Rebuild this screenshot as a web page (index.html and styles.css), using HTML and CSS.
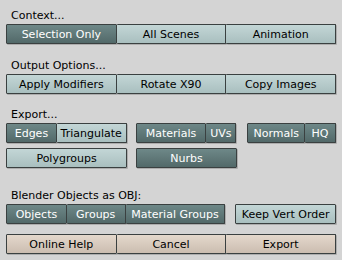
FILE: index.html
```html
<!DOCTYPE html>
<html lang="en">
<head>
    <meta charset="UTF-8">
    <title>OBJ Export</title>
    <link rel="stylesheet" href="styles.css">
</head>
<body>
    <div class="panel">
        <div class="section s-context">
            <div class="label">Context...</div>
            <div class="row">
                <div class="btn dark grow">Selection Only</div>
                <div class="btn light grow join">All Scenes</div>
                <div class="btn light grow join">Animation</div>
            </div>
        </div>

        <div class="section s-output">
            <div class="label">Output Options...</div>
            <div class="row">
                <div class="btn light grow">Apply Modifiers</div>
                <div class="btn light grow join">Rotate X90</div>
                <div class="btn light grow join">Copy Images</div>
            </div>
        </div>

        <div class="section s-export">
            <div class="label">Export...</div>
            <div class="row">
                <div class="btn dark w-edges">Edges</div>
                <div class="btn light join w-tri">Triangulate</div>
                <div class="btn dark w-mat gap9">Materials</div>
                <div class="btn dark join w-uvs">UVs</div>
                <div class="btn dark w-norm gap11">Normals</div>
                <div class="btn dark join w-hq">HQ</div>
            </div>
            <div class="row row2">
                <div class="btn light w-poly">Polygroups</div>
                <div class="btn dark w-nurbs gap9">Nurbs</div>
            </div>
        </div>

        <div class="section s-objects">
            <div class="label">Blender Objects as OBJ:</div>
            <div class="row">
                <div class="btn dark w-obj">Objects</div>
                <div class="btn dark join w-grp">Groups</div>
                <div class="btn dark join w-matgrp">Material Groups</div>
                <div class="btn light w-keep gap10">Keep Vert Order</div>
            </div>
        </div>

        <div class="row s-actions">
            <div class="btn beige grow">Online Help</div>
            <div class="btn beige grow join">Cancel</div>
            <div class="btn beige grow join">Export</div>
        </div>
    </div>
</body>
</html>
```

FILE: styles.css
```css
* {
    margin: 0;
    padding: 0;
    box-sizing: border-box;
}

body {
    background-color: #d4d4d4;
    font-family: "DejaVu Sans", sans-serif;
    font-size: 11px;
    color: #000;
}

.panel {
    width: 342px;
    height: 260px;
    padding: 8px 6px 0 6px;
}

.label {
    height: 16px;
    line-height: 16px;
    padding-left: 5px;
}

.section {
    display: flex;
    flex-direction: column;
}

.s-output {
    margin-top: 14px;
}

.s-export {
    margin-top: 13px;
}

.s-objects {
    margin-top: 20px;
}

.s-actions {
    margin-top: 10px;
}

.row {
    display: flex;
    width: 330px;
    height: 20px;
}

.row2 {
    margin-top: 5px;
}

.btn {
    height: 20px;
    line-height: 20px;
    text-align: center;
    white-space: nowrap;
    overflow: visible;
    border: 1px solid #3a4040;
    border-radius: 1px;
    box-shadow: 1px 1px 0 rgba(0, 0, 0, 0.18);
}

.grow {
    flex: 1;
}

.join {
    border-left: none;
}

.dark {
    background: linear-gradient(#6e8888, #526969);
    color: #fff;
}

.light {
    background: linear-gradient(#c3d6d6, #a9bfbf);
}

.beige {
    background: linear-gradient(#e4d8cc, #cbbdb0);
}

.gap9 {
    margin-left: 9px;
}

.gap10 {
    margin-left: 10px;
}

.gap11 {
    margin-left: 11px;
}

.w-edges { width: 51px; }
.w-tri { width: 70px; }
.w-mat { width: 71px; }
.w-uvs { width: 30px; }
.w-norm { width: 58px; }
.w-hq { width: 31px; }
.w-poly { width: 121px; }
.w-nurbs { width: 101px; }
.w-obj { width: 61px; }
.w-grp { width: 59px; }
.w-matgrp { width: 100px; }
.w-keep { width: 101px; }
```
